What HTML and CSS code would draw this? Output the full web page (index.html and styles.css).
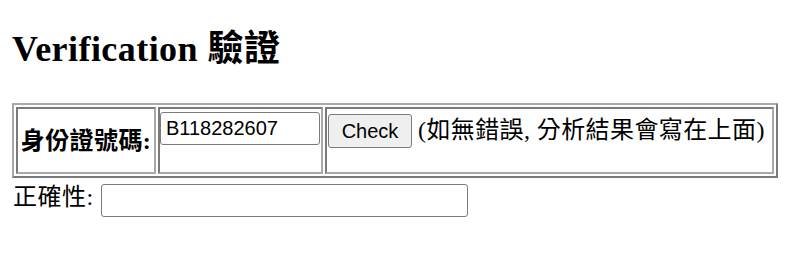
FILE: index.html
```html
<!DOCTYPE html>
<html>
<head>
<meta charset="utf-8">
<title>Verification 驗證</title>
<link rel="stylesheet" href="styles.css">
</head>
<body>
<h2 class="title">Verification 驗證</h2>
<table class="form-table">
  <tr>
    <th class="label-cell">身份證號碼:</th>
    <td class="input-cell"><input class="id-input" type="text" value="B118282607"></td>
    <td class="action-cell">
      <div class="action-row">
        <button class="check-btn" type="button">Check</button>
        <span class="hint">(如無錯誤, 分析結果會寫在上面)</span>
      </div>
    </td>
  </tr>
</table>
<div class="result-row">
  <span class="result-label">正確性:</span>
  <input class="result-input" type="text">
</div>
</body>
</html>
```

FILE: styles.css
```css
html, body {
  margin: 0;
  background: #ffffff;
}

body {
  padding: 0 12px;
  font-family: "Liberation Serif", "Noto Sans CJK TC", serif;
  font-size: 24px;
  color: #000000;
}

.title {
  margin: 28px 0 33px;
  font-size: 36px;
  line-height: 42px;
  font-weight: bold;
  letter-spacing: 0.45px;
}

.form-table {
  table-layout: fixed;
  width: 766px;
  border-collapse: separate;
  border-spacing: 2px;
  border: 2px solid;
  border-color: #a9a9a9 #7a7a7a #7a7a7a #a9a9a9;
}

.form-table th,
.form-table td {
  box-sizing: border-box;
  height: 67px;
  padding: 0;
  border: 2px solid;
  border-color: #7a7a7a #a9a9a9 #a9a9a9 #7a7a7a;
}

.label-cell {
  width: 140px;
  vertical-align: middle;
  text-align: center;
  font-weight: bold;
  line-height: 28px;
  letter-spacing: 0.4px;
}

.input-cell {
  width: 165px;
  vertical-align: top;
  padding-top: 3px !important;
}

.action-cell {
  width: 449px;
  vertical-align: top;
  padding-top: 5px !important;
  padding-left: 1px !important;
}

.id-input,
.result-input {
  box-sizing: border-box;
  height: 33px;
  margin: 0;
  padding: 1px 5px;
  border: 1.5px solid #7b7b7b;
  border-radius: 3px;
  background: #ffffff;
  font-family: "Liberation Sans", Arial, sans-serif;
  font-size: 20px;
  color: #000000;
}

.id-input {
  width: 160px;
  display: block;
}

.action-row {
  display: flex;
  align-items: flex-start;
  gap: 6px;
}

.check-btn {
  box-sizing: border-box;
  width: 84px;
  height: 34px;
  margin: 0;
  padding: 0;
  border: 1.5px solid #7b7b7b;
  border-radius: 3px;
  background: #efefef;
  font-family: "Liberation Sans", Arial, sans-serif;
  font-size: 20px;
  color: #000000;
}

.hint {
  line-height: 32px;
  white-space: nowrap;
  letter-spacing: 0.4px;
}

.result-row {
  display: flex;
  align-items: flex-start;
  gap: 7px;
  margin-top: 6px;
}

.result-label {
  line-height: 27px;
  padding-left: 1px;
  letter-spacing: 0.5px;
}

.result-input {
  width: 367px;
}
```
